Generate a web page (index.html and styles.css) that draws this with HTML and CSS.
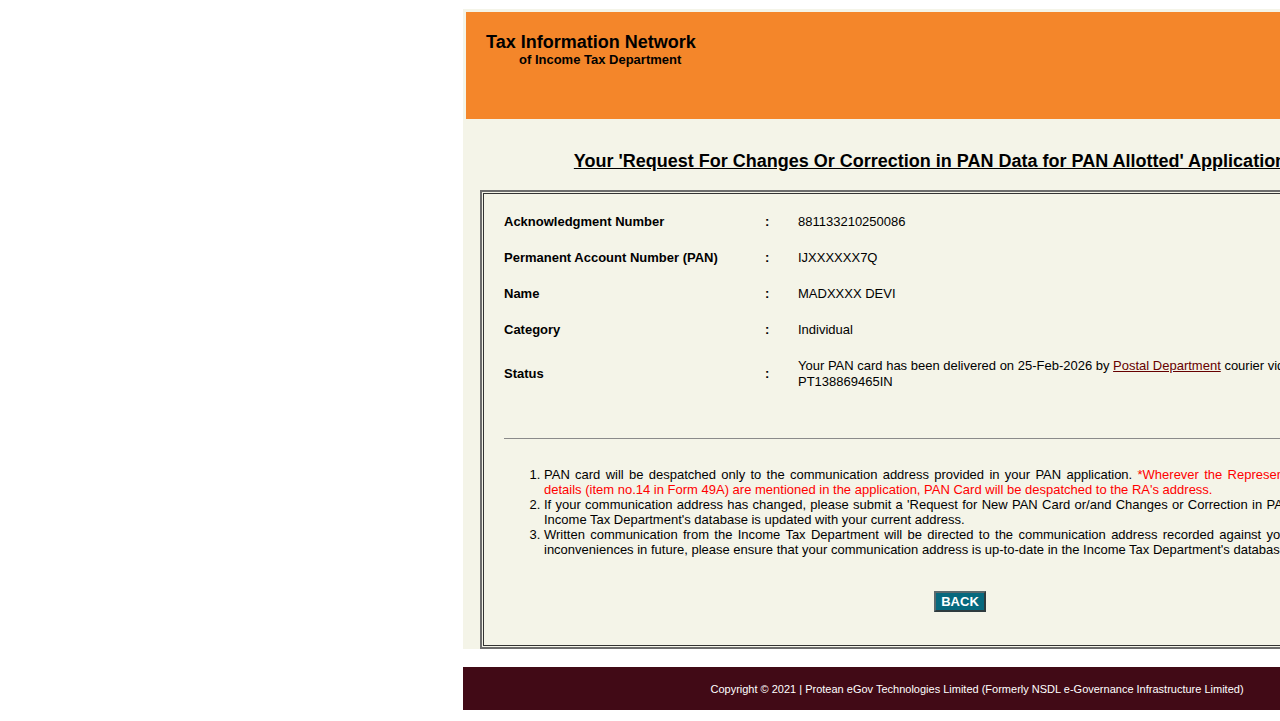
FILE: index.html
```html
<!DOCTYPE html>
<html lang="en">
<head>
<meta charset="utf-8">
<title>PAN Application Status</title>
<link rel="stylesheet" href="styles.css">
</head>
<body>
<div class="page">
  <div class="container">
    <div class="header">
      <div class="brand">Tax Information Network</div>
      <div class="brand-sub">of Income Tax Department</div>
    </div>
    <h1 class="title">Your 'Request For Changes Or Correction in PAN Data for PAN Allotted' Application Status</h1>
    <div class="box">
      <div class="row">
        <div class="label">Acknowledgment Number</div>
        <div class="colon">:</div>
        <div class="value">881133210250086</div>
      </div>
      <div class="row">
        <div class="label">Permanent Account Number (PAN)</div>
        <div class="colon">:</div>
        <div class="value">IJXXXXXX7Q</div>
      </div>
      <div class="row">
        <div class="label">Name</div>
        <div class="colon">:</div>
        <div class="value">MADXXXX DEVI</div>
      </div>
      <div class="row">
        <div class="label">Category</div>
        <div class="colon">:</div>
        <div class="value">Individual</div>
      </div>
      <div class="row">
        <div class="label">Status</div>
        <div class="colon">:</div>
        <div class="value">Your PAN card has been delivered on 25-Feb-2026 by <a class="link" href="#">Postal Department</a> courier vide Consignment No. PT138869465IN</div>
      </div>
      <hr class="rule">
      <ol class="notes">
        <li>PAN card will be despatched only to the communication address provided in your PAN application. <span class="red">*Wherever the Representative Assessee (RA) details (item no.14 in Form 49A) are mentioned in the application, PAN Card will be despatched to the RA's address.</span></li>
        <li>If your communication address has changed, please submit a 'Request for New PAN Card or/and Changes or Correction in PAN Data' to ensure the Income Tax Department's database is updated with your current address.</li>
        <li>Written communication from the Income Tax Department will be directed to the communication address recorded against your PAN. To avoid any inconveniences in future, please ensure that your communication address is up-to-date in the Income Tax Department's database.</li>
      </ol>
      <div class="actions">
        <button class="back" type="button">BACK</button>
      </div>
    </div>
  </div>
  <div class="footer">Copyright © 2021 | Protean eGov Technologies Limited (Formerly NSDL e-Governance Infrastructure Limited)</div>
</div>
</body>
</html>
```

FILE: styles.css
```css
html, body {
  margin: 0;
  padding: 0;
  background: #ffffff;
  overflow-x: hidden;
}

body {
  font-family: "Liberation Sans", Arial, sans-serif;
  color: #000;
}

.page {
  padding: 9px 0 0 463px;
  width: 1028px;
}

.container {
  width: 1000px;
  background: #f4f4e8;
  padding: 3px 0 0 3px;
  box-sizing: border-box;
}

.header {
  background: #f4862a;
  height: 107px;
  padding: 20px 0 0 20px;
  box-sizing: border-box;
}

.brand {
  font-size: 18px;
  line-height: 20px;
  font-weight: bold;
}

.brand-sub {
  font-size: 13px;
  line-height: 16px;
  font-weight: bold;
  margin-left: 33px;
}

.title {
  margin: 32px 0 19px -9px;
  font-size: 18px;
  line-height: 20px;
  font-weight: bold;
  text-decoration: underline;
  text-align: center;
}

.box {
  margin: 0 23px 0 14px;
  border: 2px solid #6d6d6d;
  box-shadow: inset 0 0 0 1px #f4f4e8, inset 0 0 0 2px #333;
  padding: 12px 22px 0 22px;
  height: 459px;
  box-sizing: border-box;
  font-size: 13px;
  line-height: 16px;
}

.row {
  display: grid;
  grid-template-columns: 261px 33px 1fr;
  align-items: center;
  padding: 10px 0;
}

.label {
  font-weight: bold;
}

.colon {
  font-weight: bold;
  color: #000;
}

.link {
  color: #660000;
  text-decoration: underline;
}

.rule {
  margin: 38px 0 0 0;
  border: 0;
  height: 1px;
  background: #8a8a8a;
}

.notes {
  margin: 28px 8px 0 0;
  padding-left: 40px;
  line-height: 15px;
  text-align: justify;
}

.red {
  color: #ff0000;
}

.actions {
  margin-top: 34px;
  text-align: center;
}

.back {
  font-family: "Liberation Sans", Arial, sans-serif;
  font-size: 13px;
  font-weight: bold;
  color: #ffffff;
  background: #07697e;
  border: 2px solid #2e3b3e;
  border-top-color: #5a6a6e;
  border-left-color: #5a6a6e;
  height: 21px;
  width: 52px;
  padding: 0;
  line-height: 17px;
}

.footer {
  margin-top: 18px;
  height: 43px;
  background: #410a16;
  color: #ffffff;
  font-size: 11px;
  display: flex;
  align-items: center;
  justify-content: center;
}
```
